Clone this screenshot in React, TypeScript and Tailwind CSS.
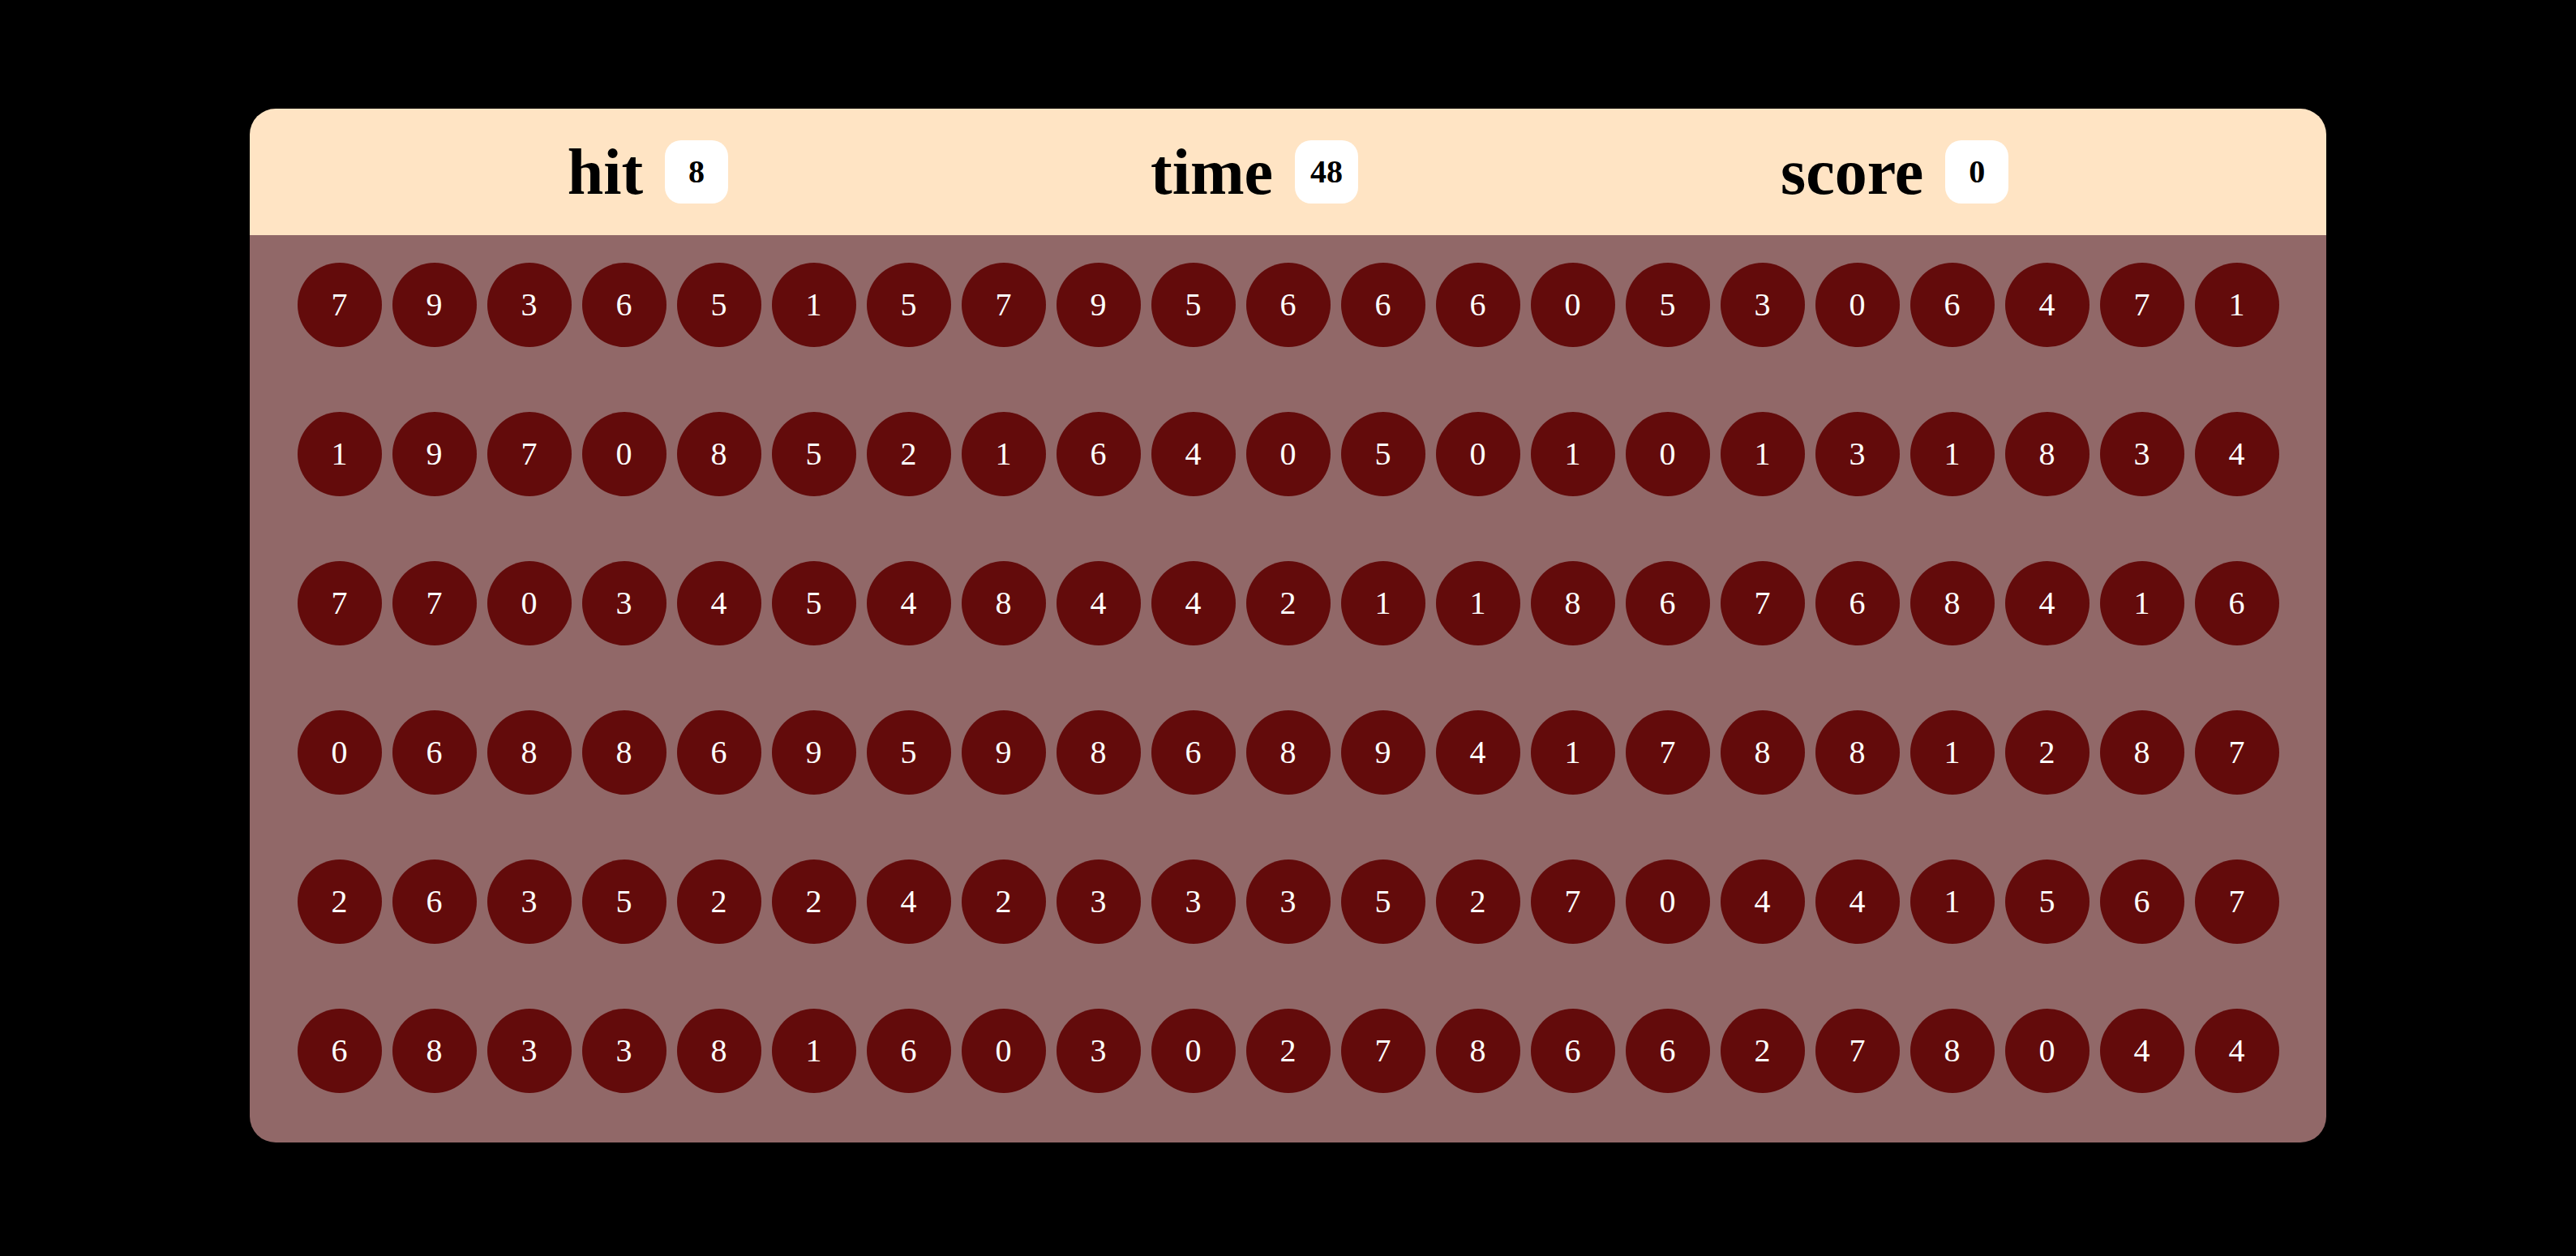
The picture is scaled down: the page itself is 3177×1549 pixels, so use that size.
const rows = [
  '793651579566605306471',
  '197085216405010131834',
  '770345484421186768416',
  '068869598689417881287',
  '263522423335270441567',
  '683381603027866278044',
]

const stats = [
  { label: 'hit', value: '8' },
  { label: 'time', value: '48' },
  { label: 'score', value: '0' },
]

export default function App() {
  return (
    <div className="min-h-[1549px] bg-black pt-[134px] font-['Liberation_Serif',serif]">
      <div className="mx-auto w-[2561px] overflow-hidden rounded-[32px]">
        {/* scoreboard */}
        <div className="flex h-[156px] items-center justify-center gap-[521px] bg-[#ffe4c4]">
          {stats.map((s) => (
            <div key={s.label} className="flex items-center gap-[27px]">
              <span className="text-[80px] font-bold leading-none text-black">{s.label}</span>
              <span className="flex h-[78px] w-[78px] items-center justify-center rounded-[20px] bg-white text-[40px] font-bold leading-none text-black">
                {s.value}
              </span>
            </div>
          ))}
        </div>

        {/* board */}
        <div className="flex flex-col gap-y-[80px] bg-[#916868] pb-[61px] pt-[34px]">
          {rows.map((row, r) => (
            <div key={r} className="grid grid-cols-[repeat(21,104px)] justify-center gap-x-[13px]">
              {row.split('').map((d, i) => (
                <div
                  key={i}
                  className="flex h-[104px] w-[104px] items-center justify-center rounded-full bg-[#630b0b] text-[40px] leading-none text-white"
                >
                  {d}
                </div>
              ))}
            </div>
          ))}
        </div>
      </div>
    </div>
  )
}
